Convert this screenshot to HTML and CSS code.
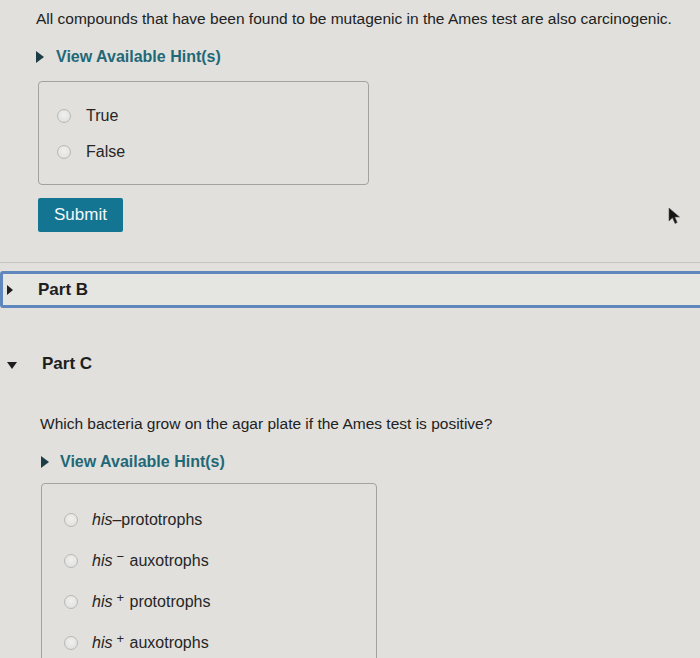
FILE: index.html
```html
<!DOCTYPE html>
<html>
<head>
<meta charset="utf-8">
<link rel="stylesheet" href="styles.css">
</head>
<body>
<div class="part-a">
  <p class="q">All compounds that have been found to be mutagenic in the Ames test are also carcinogenic.</p>
  <div class="hint"><span class="tri-r tri-hint"></span>View Available Hint(s)</div>
  <div class="choices choices-a">
    <div class="opt"><span class="radio"></span><span>True</span></div>
    <div class="opt"><span class="radio"></span><span>False</span></div>
  </div>
  <button class="submit">Submit</button>
</div>
<div class="part-b"><span class="tri-r"></span>Part B</div>
<div class="part-c-head"><span class="tri-d"></span>Part C</div>
<div class="part-c">
  <p class="q">Which bacteria grow on the agar plate if the Ames test is positive?</p>
  <div class="hint hint-c"><span class="tri-r tri-hint"></span>View Available Hint(s)</div>
  <div class="choices choices-c">
    <div class="opt"><span class="radio"></span><span><i>his</i>–prototrophs</span></div>
    <div class="opt"><span class="radio"></span><span><i>his</i><sup>−</sup> auxotrophs</span></div>
    <div class="opt"><span class="radio"></span><span><i>his</i><sup>+</sup> prototrophs</span></div>
    <div class="opt"><span class="radio"></span><span><i>his</i><sup>+</sup> auxotrophs</span></div>
  </div>
</div>
<svg class="cursor" width="14" height="18" viewBox="0 0 14 18"><path d="M1 1 L1 14 L4.5 10.8 L7 16.5 L9.2 15.5 L6.8 10 L11.5 10 Z" fill="#151515" stroke="#555" stroke-width="0.6"/></svg>
</body>
</html>
```
FILE: styles.css
```css
html, body {
  margin: 0;
}
body {
  width: 700px;
  height: 658px;
  overflow: hidden;
  position: relative;
  background: #e1e0dc;
  font-family: "Liberation Sans", Arial, sans-serif;
  color: #222;
}
.part-a {
  box-sizing: border-box;
  height: 263px;
  padding: 9px 0 0 36px;
  border-bottom: 1px solid #c6c6c2;
}
.q {
  margin: 0;
  font-size: 15.5px;
  line-height: 20px;
}
.hint {
  margin-top: 18px;
  height: 20px;
  display: flex;
  align-items: center;
  gap: 12px;
  font-size: 16px;
  font-weight: bold;
  color: #1f6878;
}
.tri-r {
  width: 0;
  height: 0;
  border-left: 6px solid #1e1e1e;
  border-top: 5px solid transparent;
  border-bottom: 5px solid transparent;
}
.tri-hint {
  border-left: 8px solid #1d3d46;
  border-top: 6px solid transparent;
  border-bottom: 6px solid transparent;
}
.tri-d {
  width: 0;
  height: 0;
  border-top: 7px solid #1e1e1e;
  border-left: 5.5px solid transparent;
  border-right: 5.5px solid transparent;
  margin-top: 3px;
}
.choices {
  box-sizing: border-box;
  border: 1px solid #a2a2a0;
  border-radius: 4px;
  display: flex;
  flex-direction: column;
}
.choices-a {
  margin: 14px 0 0 2px;
  width: 331px;
  height: 104px;
  padding: 24px 0 0 18px;
  gap: 16px;
}
.opt {
  display: flex;
  align-items: center;
  height: 20px;
  font-size: 16px;
  line-height: 20px;
  color: #262626;
}
.radio {
  box-sizing: border-box;
  width: 14px;
  height: 14px;
  border-radius: 50%;
  border: 1.5px solid #b8b8b5;
  background: radial-gradient(circle at 50% 40%, #f0f0ee, #dddddb);
  margin-right: 15px;
  flex: none;
}
.submit {
  display: block;
  margin: 13px 0 0 2px;
  width: 85px;
  height: 34px;
  border: none;
  border-radius: 2px;
  background: #137591;
  color: #f4f8fa;
  font-family: "Liberation Sans", Arial, sans-serif;
  font-size: 17px;
  padding: 0;
}
.part-b {
  box-sizing: border-box;
  margin-top: 8px;
  width: 706px;
  height: 37px;
  border: 3px solid #5f87bd;
  border-radius: 3px;
  background: #e5e5e2;
  display: flex;
  align-items: center;
  padding: 1px 0 0 4px;
  gap: 25px;
  font-size: 17px;
  font-weight: bold;
  color: #1e1e1e;
}
.part-c-head {
  margin-top: 36px;
  height: 40px;
  display: flex;
  align-items: center;
  padding-left: 7px;
  gap: 25px;
  font-size: 17px;
  font-weight: bold;
  color: #1e1e1e;
}
.part-c {
  padding-left: 40px;
}
.part-c .q {
  margin-top: 30px;
}
.hint-c {
  margin-left: 1px;
  gap: 11px;
}
.choices-c {
  margin: 11px 0 0 1px;
  width: 336px;
  height: 200px;
  padding: 26px 0 0 22px;
  gap: 21px;
}
.choices-c .radio {
  margin-right: 14px;
}
.opt i {
  font-style: italic;
}
.opt sup {
  font-size: 13px;
  margin-left: 4px;
  margin-right: 1px;
  vertical-align: 5px;
  line-height: 0;
}
.cursor {
  position: absolute;
  left: 668px;
  top: 207px;
}
```
